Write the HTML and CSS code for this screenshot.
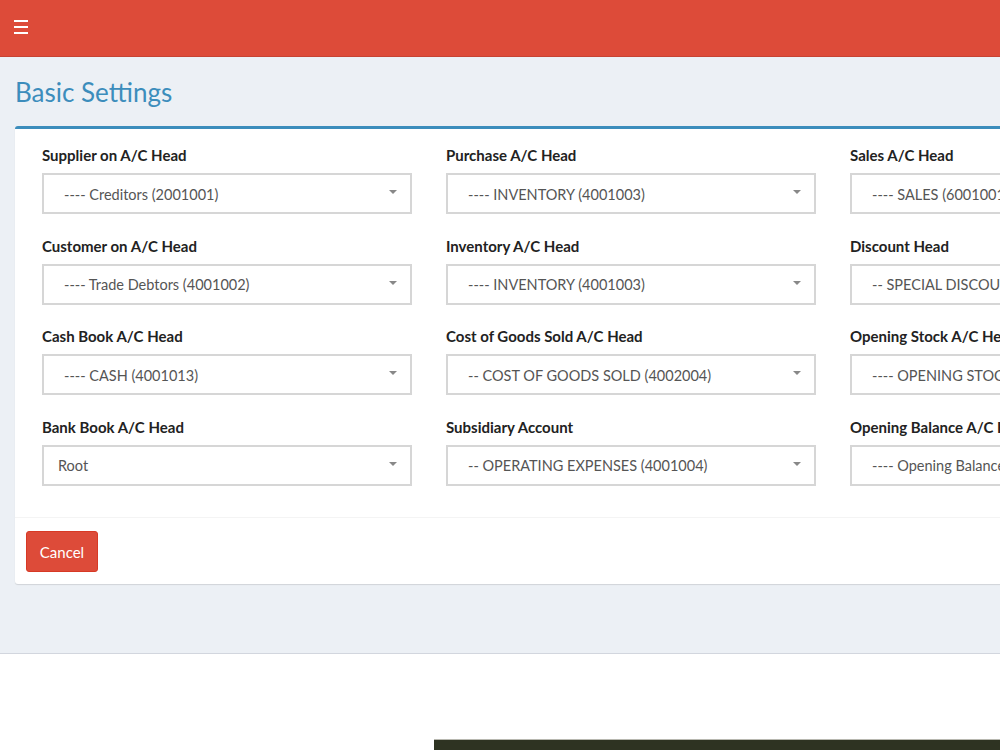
FILE: index.html
```html
<!DOCTYPE html>
<html lang="en">
<head>
    <meta charset="UTF-8">
    <meta name="viewport" content="width=device-width, initial-scale=1.0">
    <title>Basic Settings</title>
    <link rel="stylesheet" href="styles.css">
</head>
<body>
    <header class="topbar">
        <a class="menu-toggle" href="#">
            <span></span><span></span><span></span>
        </a>
    </header>

    <div class="content">
        <h1 class="page-title">Basic Settings</h1>

        <div class="box">
            <div class="box-body">
                <div class="form-grid">
                    <div class="form-group">
                        <label>Supplier on A/C Head</label>
                        <div class="select"><span>---- Creditors (2001001)</span><b></b></div>
                    </div>
                    <div class="form-group">
                        <label>Purchase A/C Head</label>
                        <div class="select"><span>---- INVENTORY (4001003)</span><b></b></div>
                    </div>
                    <div class="form-group">
                        <label>Sales A/C Head</label>
                        <div class="select"><span>---- SALES (6001001)</span><b></b></div>
                    </div>

                    <div class="form-group">
                        <label>Customer on A/C Head</label>
                        <div class="select"><span>---- Trade Debtors (4001002)</span><b></b></div>
                    </div>
                    <div class="form-group">
                        <label>Inventory A/C Head</label>
                        <div class="select"><span>---- INVENTORY (4001003)</span><b></b></div>
                    </div>
                    <div class="form-group">
                        <label>Discount Head</label>
                        <div class="select"><span>-- SPECIAL DISCOUNT</span><b></b></div>
                    </div>

                    <div class="form-group">
                        <label>Cash Book A/C Head</label>
                        <div class="select"><span>---- CASH (4001013)</span><b></b></div>
                    </div>
                    <div class="form-group">
                        <label>Cost of Goods Sold A/C Head</label>
                        <div class="select"><span>-- COST OF GOODS SOLD (4002004)</span><b></b></div>
                    </div>
                    <div class="form-group">
                        <label>Opening Stock A/C Head</label>
                        <div class="select"><span>---- OPENING STOCK</span><b></b></div>
                    </div>

                    <div class="form-group">
                        <label>Bank Book A/C Head</label>
                        <div class="select"><span class="plain">Root</span><b></b></div>
                    </div>
                    <div class="form-group">
                        <label>Subsidiary Account</label>
                        <div class="select"><span>-- OPERATING EXPENSES (4001004)</span><b></b></div>
                    </div>
                    <div class="form-group">
                        <label>Opening Balance A/C Head</label>
                        <div class="select"><span>---- Opening Balance</span><b></b></div>
                    </div>
                </div>
            </div>
            <div class="box-footer">
                <button class="btn-cancel">Cancel</button>
            </div>
        </div>
    </div>

    <div class="below">
        <div class="dark-strip"></div>
    </div>
</body>
</html>
```

FILE: styles.css
```css
body {
    margin: 0;
    width: 1000px;
    height: 750px;
    overflow: hidden;
    font-family: Lato, "Noto Sans", sans-serif;
    background-color: #fff;
    color: #333;
}

.topbar {
    height: 56px;
    background-color: #dd4b39;
    border-bottom: 1px solid #c64333;
    display: flex;
    align-items: center;
}

.menu-toggle {
    display: flex;
    flex-direction: column;
    gap: 4px;
    margin-left: 14px;
    margin-top: -2px;
}

.menu-toggle span {
    display: block;
    width: 14px;
    height: 2px;
    background-color: #fff;
}

.content {
    height: 596px;
    background-color: #ecf0f5;
    border-bottom: 1px solid #d2d6de;
    padding: 0 0 0 15px;
    overflow: hidden;
}

.page-title {
    margin: 0;
    padding-top: 19px;
    height: 50px;
    font-size: 26px;
    font-weight: 400;
    color: #3c8dbc;
    line-height: 32px;
}

.box {
    width: 1240px;
    background-color: #fff;
    border-top: 3px solid #3c8dbc;
    border-radius: 3px;
    box-shadow: 0 1px 1px rgba(0, 0, 0, 0.12);
}

.box-body {
    padding: 16px 10px 10px;
}

.form-grid {
    display: grid;
    grid-template-columns: repeat(3, 404px);
}

.form-group {
    padding: 0 17px;
    margin-bottom: 21.5px;
}

.form-group label {
    display: block;
    font-size: 15px;
    font-weight: 700;
    line-height: 20px;
    color: #222;
    margin-bottom: 8px;
    white-space: nowrap;
}

.select {
    position: relative;
    width: 370px;
    height: 41px;
    box-sizing: border-box;
    border: 2px solid #d6d6d6;
    display: flex;
    align-items: center;
    padding-left: 20px;
    padding-top: 1px;
    font-size: 14.5px;
    color: #555;
    white-space: nowrap;
    overflow: hidden;
}

.select .plain {
    margin-left: -6px;
}

.select b {
    position: absolute;
    right: 13px;
    top: 15px;
    border-left: 4px solid transparent;
    border-right: 4px solid transparent;
    border-top: 4px solid #888;
}

.box-footer {
    border-top: 1px solid #f4f4f4;
    padding: 13px 11px 12px;
}

.btn-cancel {
    width: 72px;
    height: 41px;
    border: 1px solid #d73925;
    border-radius: 3px;
    background-color: #dd4b39;
    color: #fff;
    font-family: Lato, "Noto Sans", sans-serif;
    font-size: 15px;
    cursor: pointer;
}

.below {
    height: 96px;
    display: flex;
    align-items: flex-end;
    padding-left: 434px;
}

.dark-strip {
    width: 566px;
    height: 10px;
    background-color: #2e3322;
    border-top: 1px solid #b8b8b0;
}
```
